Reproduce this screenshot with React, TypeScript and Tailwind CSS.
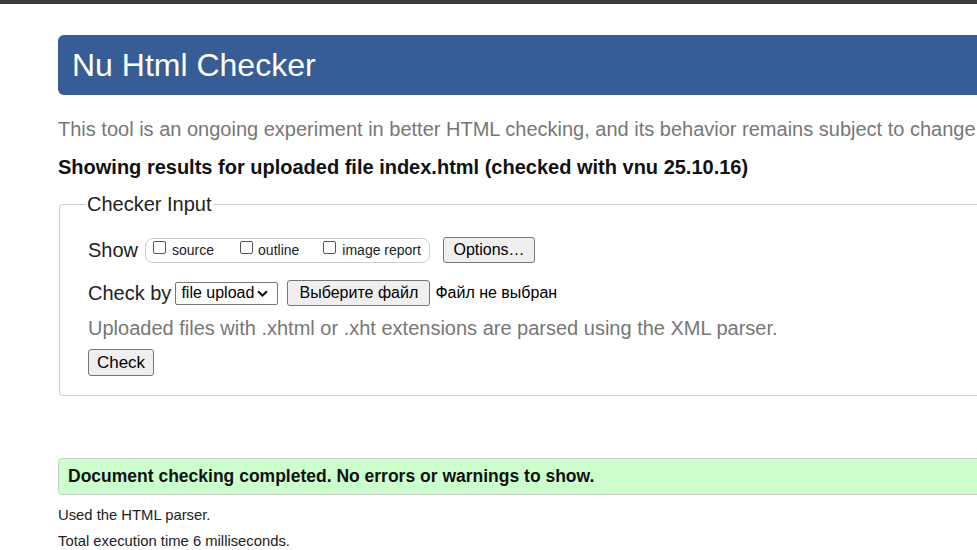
import React from "react";

export default function App() {
  return (
    <div className="w-full min-h-[550px] overflow-hidden bg-white font-['Liberation_Sans',Arial,sans-serif] text-[#222]">
      <div className="h-[4px] bg-[#3c3c3c]" />
      <div className="w-[1400px] pl-[58px]">
        <h1 className="mt-[31px] flex h-[60px] items-center rounded-l-[6px] bg-[#365d95] pl-[14px] text-[32px] leading-none text-white">
          Nu Html Checker
        </h1>
        <p className="mt-[22px] text-[20px] leading-[24px] text-[#777]">
          This tool is an ongoing experiment in better HTML checking, and its behavior remains subject to change
        </p>
        <p className="mt-[14px] text-[20px] font-bold leading-[24px] text-[#111]">
          Showing results for uploaded file index.html (checked with vnu 25.10.16)
        </p>
        <fieldset className="ml-[1px] mt-[13px] h-[204px] rounded-[4px] border border-[#ccc] pl-[28px] pr-0">
          <legend className="-ml-[2px] px-[1px] text-[20px] leading-[24px] text-[#222]">Checker Input</legend>
          <div className="mt-[21px] flex items-center">
            <span className="text-[20px] leading-[24px]">Show</span>
            <div className="ml-[7px] flex h-[25px] w-[285px] items-center rounded-[8px] border border-[#ccc] pl-[7px] text-[14px] leading-none">
              <label className="flex items-center">
                <span className="mb-[6px] inline-block h-[13px] w-[13px] rounded-[2px] border border-[#555] bg-white" />
                <span className="ml-[6px]">source</span>
              </label>
              <label className="ml-[26px] flex items-center">
                <span className="mb-[6px] inline-block h-[13px] w-[13px] rounded-[2px] border border-[#555] bg-white" />
                <span className="ml-[5px]">outline</span>
              </label>
              <label className="ml-[24px] flex items-center">
                <span className="mb-[6px] inline-block h-[13px] w-[13px] rounded-[2px] border border-[#555] bg-white" />
                <span className="ml-[6px]">image report</span>
              </label>
            </div>
            <button className="ml-[13px] h-[26px] w-[92px] rounded-[3px] border border-[#767676] bg-[#efefef] text-[16px] leading-none text-black">
              Options…
            </button>
          </div>
          <div className="mt-[17px] flex items-center">
            <span className="text-[20px] leading-[24px]">Check by</span>
            <div className="ml-[4px] flex h-[23px] w-[103px] items-center rounded-[2px] border border-[#767676] bg-white pl-[5px] text-[16px] leading-none text-black">
              <span>file upload</span>
              <svg className="ml-[3px]" width="11" height="7" viewBox="0 0 11 7">
                <path d="M1 1.2 L5.5 5.5 L10 1.2" fill="none" stroke="#111" strokeWidth="2" />
              </svg>
            </div>
            <button className="ml-[9px] h-[26px] w-[143px] rounded-[3px] border border-[#767676] bg-[#efefef] text-[16px] leading-none text-black">
              Выберите файл
            </button>
            <span className="ml-[5px] text-[16px] leading-none text-black">Файл не выбран</span>
          </div>
          <p className="mt-[10px] text-[20px] leading-[24px] text-[#777]">
            Uploaded files with .xhtml or .xht extensions are parsed using the XML parser.
          </p>
          <button className="mt-[9px] h-[27px] w-[66px] rounded-[3px] border border-[#767676] bg-[#efefef] text-[17px] leading-none text-black">
            Check
          </button>
        </fieldset>
        <div className="mt-[62px] flex h-[37px] items-center rounded-l-[4px] border border-[#ccc] bg-[#ccffcc] pl-[9px] text-[17.5px] font-bold leading-none text-[#111]">
          Document checking completed. No errors or warnings to show.
        </div>
        <p className="mt-[12px] text-[14.8px] leading-[16px] text-[#222]">Used the HTML parser.</p>
        <p className="mt-[10px] text-[14.8px] leading-[16px] text-[#222]">Total execution time 6 milliseconds.</p>
      </div>
    </div>
  );
}
